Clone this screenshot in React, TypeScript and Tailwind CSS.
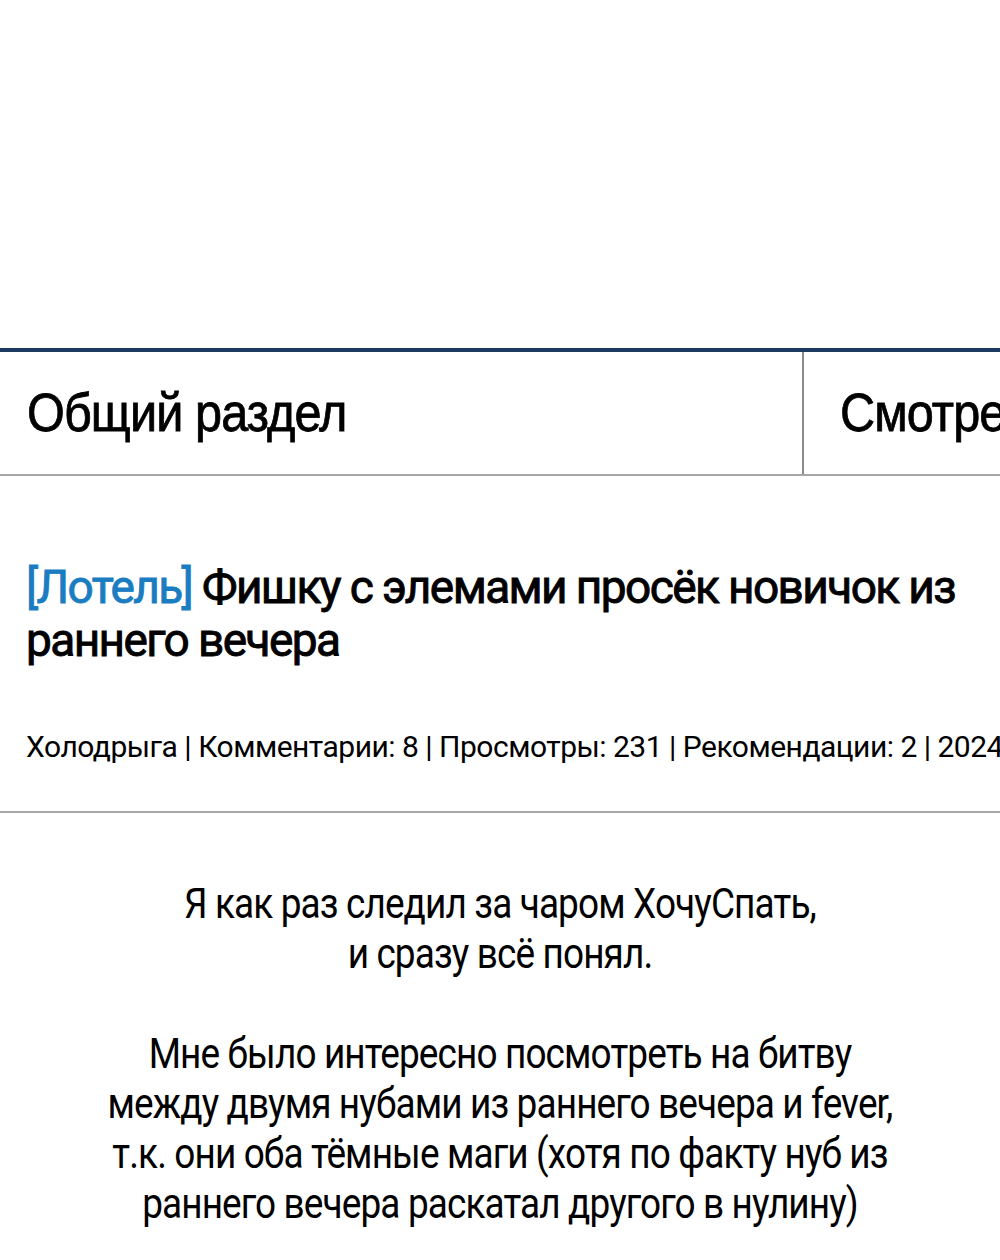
import React from "react";

const meta = "Холодрыга | Комментарии: 8 | Просмотры: 231 | Рекомендации: 2 | 2024-02-12";

export default function App() {
  return (
    <main className="w-[1000px] h-[1260px] bg-white text-black overflow-hidden">
      <div className="h-[348px]" />

      {/* Tabs */}
      <div className="border-t-4 border-[#1e3a62] flex h-[128px] border-b-2 border-b-[#a6a6a6]">
        <div className="w-[804px] shrink-0 flex items-center pl-[27px] border-r-2 border-[#8a8a8a] pb-[2px]">
          <span
            className="inline-block text-[54px] leading-none tracking-[-1px] scale-x-[0.9] origin-left [-webkit-text-stroke:0.8px_black]"
            style={{ fontFamily: '"Liberation Sans", Arial, sans-serif' }}
          >
            Общий раздел
          </span>
        </div>
        <div className="flex items-center pl-[36px] overflow-hidden whitespace-nowrap pb-[2px]">
          <span
            className="inline-block text-[54px] leading-none tracking-[-1px] scale-x-[0.9] origin-left [-webkit-text-stroke:0.8px_black]"
            style={{ fontFamily: '"Liberation Sans", Arial, sans-serif' }}
          >
            Смотреть все
          </span>
        </div>
      </div>

      <div style={{ fontFamily: 'Roboto, "Noto Sans", sans-serif' }}>
        {/* Title */}
        <h1 className="px-[26px] pt-[85px] text-[46px] leading-[53px] font-normal tracking-[-1.6px] [-webkit-text-stroke:0.9px_currentColor]">
          <span className="text-[#1a7cc1]">[Лотель]</span> Фишку с элемами просёк новичок из раннего вечера
        </h1>

        {/* Meta */}
        <div className="pl-[26px] mt-[60px] text-[30px] leading-[40px] whitespace-nowrap overflow-hidden tracking-[-0.5px]">
          {meta}
        </div>

        <div className="mt-[44px] h-[2px] bg-[#a6a6a6]" />

        {/* Body */}
        <div className="pt-[66px] text-center text-[42px] leading-[50px] tracking-[-1px] scale-x-[0.88] origin-center">
          <p>
            Я как раз следил за чаром ХочуСпать,
            <br />
            и сразу всё понял.
          </p>
          <p className="mt-[50px]">
            Мне было интересно посмотреть на битву
            <br />
            между двумя нубами из раннего вечера и fever,
            <br />
            т.к. они оба тёмные маги (хотя по факту нуб из
            <br />
            раннего вечера раскатал другого в нулину)
          </p>
        </div>
      </div>
    </main>
  );
}
